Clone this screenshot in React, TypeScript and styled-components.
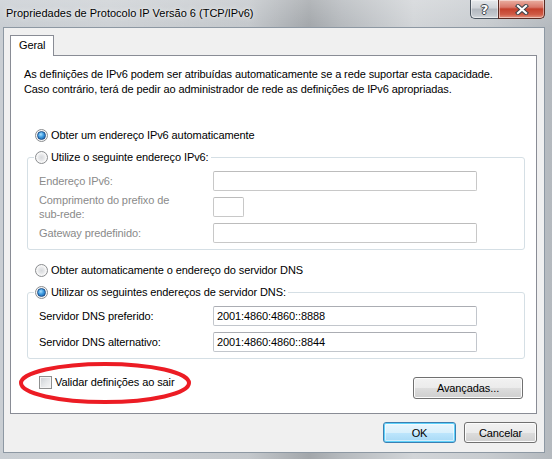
import React from "react";
import styled, { createGlobalStyle } from "styled-components";

const Global = createGlobalStyle`
  html, body { margin: 0; padding: 0; background: #ffffff; }
  body { font-family: "Liberation Sans", Arial, sans-serif; font-size: 11px; letter-spacing: -0.1px; color: #000; }
  * { box-sizing: border-box; }
`;

const Window = styled.div`
  position: relative;
  width: 552px;
  height: 459px;
  display: flex;
  flex-direction: column;
  overflow: hidden;
  background:
    linear-gradient(180deg, rgba(255,255,255,0.18) 0px, rgba(255,255,255,0) 27px),
    linear-gradient(90deg, #c9ced3 0%, #cdd1d5 20%, #c4c8cc 45%, #a3a7ab 56%, #b6babe 62%, #d2d5d8 75%, #c8ccd0 88%, #b4b9be 100%);
`;

const TitleBar = styled.div`
  height: 27px;
  flex: none;
  display: flex;
  align-items: flex-start;
  padding: 0 7px 0 6px;
`;

const TitleText = styled.div`
  line-height: 27px;
  color: #000;
  letter-spacing: 0;
  text-shadow: 0 0 6px rgba(255, 255, 255, 0.9), 0 0 2px rgba(255, 255, 255, 0.7);
  white-space: nowrap;
`;

const CaptionButtons = styled.div`
  margin-left: auto;
  display: flex;
  height: 19px;
`;

const CaptionButton = styled.div<{ $kind: "help" | "close" }>`
  height: 19px;
  width: ${(p) => (p.$kind === "help" ? 28 : 47)}px;
  display: flex;
  align-items: center;
  justify-content: center;
  border: 1px solid ${(p) => (p.$kind === "help" ? "#4b5560" : "#5a2a22")};
  border-top: none;
  ${(p) => (p.$kind === "help" ? "border-right: none;" : "")}
  border-radius: ${(p) => (p.$kind === "help" ? "0 0 0 5px" : "0 0 5px 0")};
  background: ${(p) =>
    p.$kind === "help"
      ? "linear-gradient(180deg, #e6e9ec 0%, #cfd3d8 45%, #b2b8bf 50%, #c3c8ce 85%, #d9dde1 100%)"
      : "linear-gradient(180deg, #eab0a2 0%, #d9786a 40%, #c4402c 50%, #cf5a45 80%, #e49481 100%)"};
  box-shadow: inset 0 0 0 1px rgba(255, 255, 255, 0.45);
  color: #fff;
  font-family: "DejaVu Sans", sans-serif;
  font-weight: bold;
  font-size: 13px;
  text-shadow: 1px 0 0 #3d434a, -1px 0 0 #3d434a, 0 1px 0 #3d434a, 0 -1px 0 #3d434a;
`;

const Client = styled.div`
  flex: 1;
  margin: 0 7px 6px 3px;
  border: 1px solid #8d98a3;
  background: #f0f0f0;
  padding: 7px 7px 9px 6px;
  display: flex;
  flex-direction: column;
`;

const Tab = styled.div`
  position: relative;
  z-index: 1;
  width: 44px;
  height: 21px;
  margin-bottom: -1px;
  border: 1px solid #898c95;
  border-bottom: none;
  background: #ffffff;
  padding-left: 8px;
  line-height: 19px;
`;

const Panel = styled.div`
  height: 359px;
  border: 1px solid #898c95;
  background: #ffffff;
  padding: 11px 11px 0 13px;
  display: flex;
  flex-direction: column;
`;

const Description = styled.p`
  margin: 0;
  line-height: 15px;
`;

const RadioRow = styled.label<{ $top?: number }>`
  display: flex;
  align-items: center;
  height: 16px;
  margin-left: 11px;
  margin-top: ${(p) => p.$top ?? 0}px;
  white-space: nowrap;
`;

const Radio = styled.span<{ $checked?: boolean }>`
  flex: none;
  width: 13px;
  height: 13px;
  margin-right: 3px;
  border-radius: 50%;
  border: 1px solid #8b8d90;
  background: radial-gradient(circle at 50% 50%, #d8dadd 0%, #e6e7e9 35%, #f6f6f6 60%, #dfe0e2 100%);
  box-shadow: inset 0 0 0 1px #f7f7f7;
  display: flex;
  align-items: center;
  justify-content: center;
  &::after {
    content: "";
    display: ${(p) => (p.$checked ? "block" : "none")};
    width: 7px;
    height: 7px;
    border-radius: 50%;
    border: 1px solid #1c4f8a;
    background: radial-gradient(circle at 40% 35%, #a8e0ff 0%, #3d9ae0 45%, #12539c 100%);
  }
`;

const Group = styled.fieldset<{ $top: number }>`
  margin: ${(p) => p.$top}px 0 0 3px;
  padding: 0;
  min-width: 0;
  border: 1px solid #d5dfe5;
  border-radius: 3px;
`;

const Legend = styled.legend`
  margin-left: 6px;
  padding: 0 2px 0 1px;
  height: 16px;
  display: flex;
  align-items: center;
  white-space: nowrap;
`;

const FieldGrid = styled.div`
  display: grid;
  grid-template-columns: 174px auto;
  grid-auto-rows: 20px;
  row-gap: 6px;
  align-items: center;
  justify-items: start;
  padding: 6px 0 6px 11px;
`;

const FieldLabel = styled.div<{ $disabled?: boolean }>`
  color: ${(p) => (p.$disabled ? "#8a8a8a" : "#000")};
  line-height: 14px;
  white-space: nowrap;
`;

const TextBox = styled.div<{ $disabled?: boolean; $width: number }>`
  width: ${(p) => p.$width}px;
  height: 20px;
  border: 1px solid ${(p) => (p.$disabled ? "#c8c8c8" : "#c2c6cc")};
  border-top-color: ${(p) => (p.$disabled ? "#bcbcbc" : "#abadb3")};
  border-radius: 2px;
  background: #ffffff;
  padding-left: 3px;
  line-height: 18px;
  white-space: nowrap;
`;

const BottomRow = styled.div`
  margin-top: 18px;
  display: flex;
  justify-content: space-between;
  align-items: flex-start;
`;

const CheckRow = styled.label`
  display: flex;
  align-items: center;
  height: 16px;
  margin: -3px 0 0 15px;
  white-space: nowrap;
`;

const CheckBox = styled.span`
  flex: none;
  width: 13px;
  height: 13px;
  margin-right: 3px;
  border: 1px solid #8e8f8f;
  background: linear-gradient(135deg, #c9ccd1 0%, #e4e6e8 50%, #f7f7f7 100%);
  box-shadow: inset 0 0 0 1px #f4f4f4;
`;

const Button = styled.div<{ $width: number; $default?: boolean }>`
  width: ${(p) => p.$width}px;
  height: ${(p) => (p.$default !== undefined ? 21 : 22)}px;
  display: flex;
  align-items: center;
  justify-content: center;
  border: 1px solid ${(p) => (p.$default ? "#3c7fb1" : "#707070")};
  border-radius: 3px;
  background: ${(p) =>
    p.$default
      ? "linear-gradient(180deg, #eaf6fd 0%, #d9f0fc 50%, #bee6fd 50%, #a7d9f5 100%)"
      : "linear-gradient(180deg, #f2f2f2 0%, #ebebeb 50%, #dddddd 50%, #cfcfcf 100%)"};
  box-shadow: ${(p) =>
    p.$default ? "inset 0 0 0 1px #5fd2fb, inset 0 0 0 2px rgba(255,255,255,0.5)" : "inset 0 0 0 1px #fcfcfc"};
  white-space: nowrap;
`;

const Footer = styled.div`
  margin-top: 8px;
  display: flex;
  justify-content: flex-end;
  gap: 8px;
`;

const Annotation = styled.svg`
  position: absolute;
  left: 19px;
  top: 362px;
  pointer-events: none;
`;

export default function App() {
  return (
    <>
      <Global />
      <Window>
        <TitleBar>
          <TitleText>Propriedades de Protocolo IP Versão 6 (TCP/IPv6)</TitleText>
          <CaptionButtons>
            <CaptionButton $kind="help">?</CaptionButton>
            <CaptionButton $kind="close">
              <svg width="14" height="11" viewBox="0 0 14 11">
                <path d="M3 2 L11 9 M11 2 L3 9" stroke="#3d434a" strokeWidth="4.2" strokeLinecap="square" fill="none" />
                <path d="M3 2 L11 9 M11 2 L3 9" stroke="#ffffff" strokeWidth="2.2" strokeLinecap="square" fill="none" />
              </svg>
            </CaptionButton>
          </CaptionButtons>
        </TitleBar>
        <Client>
          <Tab>Geral</Tab>
          <Panel>
            <Description>
              As definições de IPv6 podem ser atribuídas automaticamente se a rede suportar esta capacidade.
              <br />
              Caso contrário, terá de pedir ao administrador de rede as definições de IPv6 apropriadas.
            </Description>
            <RadioRow $top={30}>
              <Radio $checked />
              Obter um endereço IPv6 automaticamente
            </RadioRow>
            <Group $top={6}>
              <Legend>
                <Radio />
                Utilize o seguinte endereço IPv6:
              </Legend>
              <FieldGrid>
                <FieldLabel $disabled>Endereço IPv6:</FieldLabel>
                <TextBox $disabled $width={264} />
                <FieldLabel $disabled>
                  Comprimento do prefixo de
                  <br />
                  sub-rede:
                </FieldLabel>
                <TextBox $disabled $width={31} />
                <FieldLabel $disabled>Gateway predefinido:</FieldLabel>
                <TextBox $disabled $width={264} />
              </FieldGrid>
            </Group>
            <RadioRow $top={12}>
              <Radio />
              Obter automaticamente o endereço do servidor DNS
            </RadioRow>
            <Group $top={6}>
              <Legend>
                <Radio $checked />
                Utilizar os seguintes endereços de servidor DNS:
              </Legend>
              <FieldGrid>
                <FieldLabel>Servidor DNS preferido:</FieldLabel>
                <TextBox $width={264}>2001:4860:4860::8888</TextBox>
                <FieldLabel>Servidor DNS alternativo:</FieldLabel>
                <TextBox $width={264}>2001:4860:4860::8844</TextBox>
              </FieldGrid>
            </Group>
            <BottomRow>
              <CheckRow>
                <CheckBox />
                Validar definições ao sair
              </CheckRow>
              <Button $width={110} style={{ marginRight: 2 }}>
                Avançadas...
              </Button>
            </BottomRow>
          </Panel>
          <Footer>
            <Button $width={73} $default>
              OK
            </Button>
            <Button $width={73} $default={false}>
              Cancelar
            </Button>
          </Footer>
        </Client>
        <Annotation width="172" height="42" viewBox="0 0 172 42">
          <ellipse cx="86" cy="21" rx="84" ry="19" fill="none" stroke="#ec1c24" strokeWidth="4" />
        </Annotation>
      </Window>
    </>
  );
}
